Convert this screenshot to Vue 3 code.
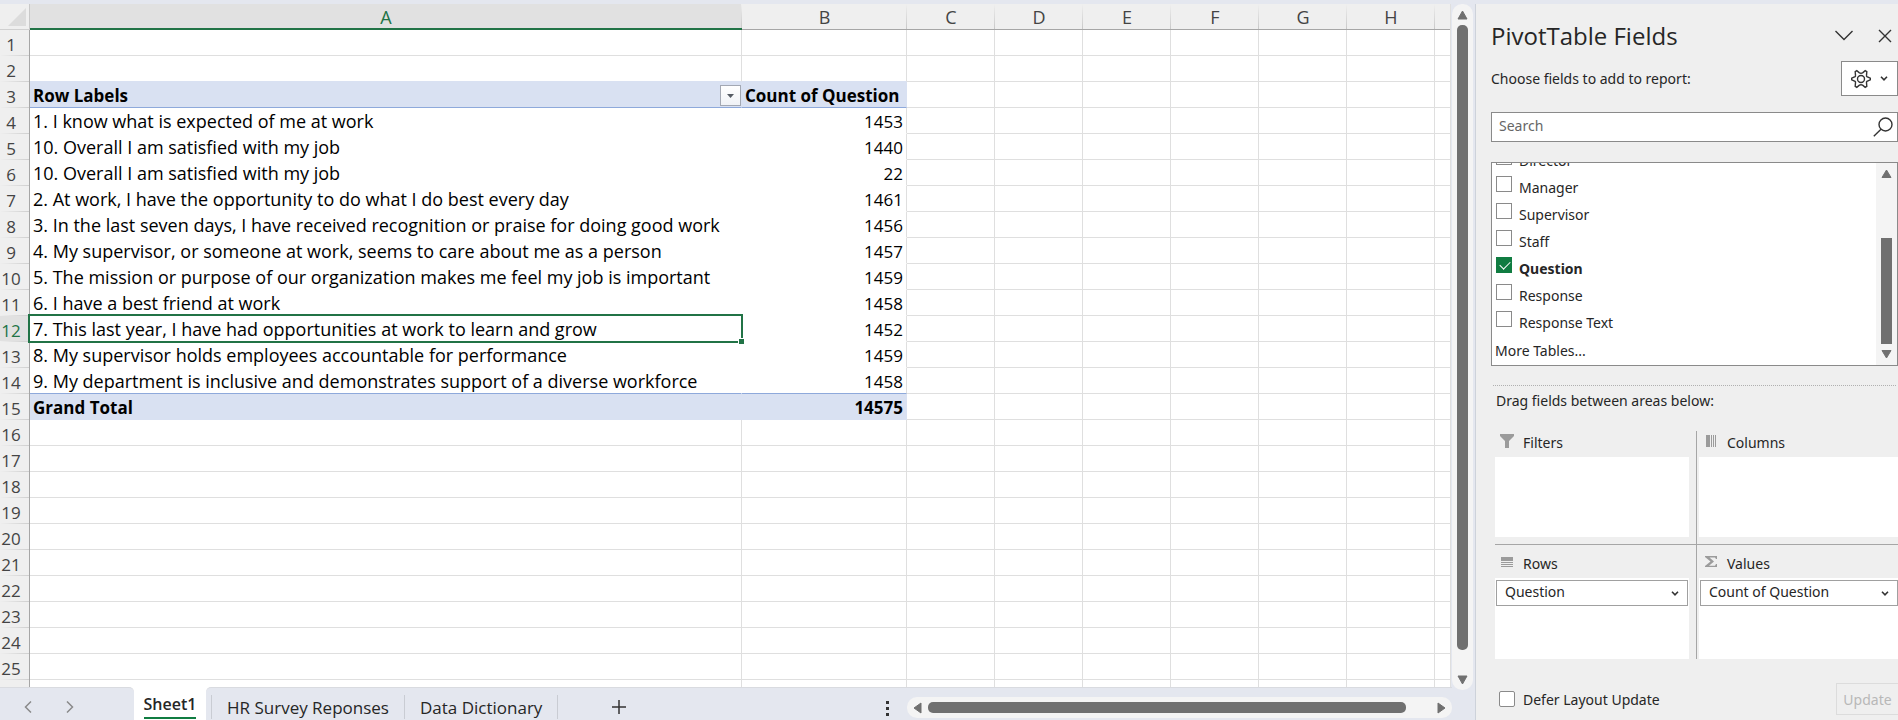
<script setup>
import { ref } from 'vue'

const columns = ['A', 'B', 'C', 'D', 'E', 'F', 'G', 'H', '']
const restColumns = columns.slice(2)

const content = {
  3: ['Row Labels', 'Count of Question'],
  4: ['1. I know what is expected of me at work', '1453'],
  5: ['10. Overall I am satisfied with my job', '1440'],
  6: ['10. Overall I am satisfied with my job', '22'],
  7: ['2. At work, I have the opportunity to do what I do best every day', '1461'],
  8: ['3. In the last seven days, I have received recognition or praise for doing good work', '1456'],
  9: ['4. My supervisor, or someone at work, seems to care about me as a person', '1457'],
  10: ['5. The mission or purpose of our organization makes me feel my job is important', '1459'],
  11: ['6. I have a best friend at work', '1458'],
  12: ['7. This last year, I have had opportunities at work to learn and grow', '1452'],
  13: ['8. My supervisor holds employees accountable for performance', '1459'],
  14: ['9. My department is inclusive and demonstrates support of a diverse workforce', '1458'],
  15: ['Grand Total', '14575'],
}
const rows = Array.from({ length: 26 }, (_, i) => {
  const n = i + 1
  return { n, label: n < 26 ? n : '', a: content[n]?.[0] ?? '', b: content[n]?.[1] ?? '' }
})
function rowClass(n) {
  return {
    'before-head': n === 2,
    'pivot-head': n === 3,
    'pivot-body': n > 3 && n < 15,
    'pivot-last': n === 14,
    'pivot-total': n === 15,
    active: n === 12,
  }
}

const fields = ref([
  { name: 'Director', on: false },
  { name: 'Manager', on: false },
  { name: 'Supervisor', on: false },
  { name: 'Staff', on: false },
  { name: 'Question', on: true },
  { name: 'Response', on: false },
  { name: 'Response Text', on: false },
])
const search = ref('')
const defer = ref(false)
</script>

<template>
  <div class="app">
    <main class="workbook">
      <div class="sheet">
        <div class="grid">
          <table>
            <colgroup>
              <col class="c-num" /><col class="c-a" /><col class="c-b" />
              <col v-for="i in 6" :key="i" class="c-std" /><col />
            </colgroup>
            <thead>
              <tr>
                <th class="corner"><svg width="18" height="18" viewBox="0 0 18 18"><path d="M18 0v18H0z" fill="#dcdcdc" /></svg></th>
                <th v-for="(c, i) in columns" :key="i" scope="col" :class="{ selected: i === 0 }">{{ c }}</th>
              </tr>
            </thead>
            <tbody>
              <tr v-for="r in rows" :key="r.n" :class="rowClass(r.n)">
                <th scope="row">{{ r.label }}</th>
                <td class="a">
                  <div v-if="r.n === 3" class="with-filter">
                    <span>{{ r.a }}</span>
                    <button class="filter" aria-label="Filter row labels">
                      <svg width="7" height="4" viewBox="0 0 7 4"><path d="M0 0h7L3.500 4z" fill="#555b63" /></svg>
                    </button>
                  </div>
                  <template v-else>{{ r.a }}</template>
                  <span v-if="r.n === 12" class="cursor"><i></i></span>
                </td>
                <td class="b">{{ r.b }}</td>
                <td v-for="(c, i) in restColumns" :key="i"></td>
              </tr>
            </tbody>
          </table>
        </div>

        <footer class="bar">
          <div class="bar-nav">
            <button aria-label="Previous sheet"><svg width="8" height="12" viewBox="0 0 8 12"><path d="M7 .5 1.500 6 7 11.500" /></svg></button>
            <button aria-label="Next sheet"><svg width="8" height="12" viewBox="0 0 8 12"><path d="M1 .5 6.500 6 1 11.500" /></svg></button>
          </div>
          <button class="tab-active"><span>Sheet1</span></button>
          <div class="bar-rest">
            <button class="tab">HR Survey Reponses</button>
            <button class="tab">Data Dictionary</button>
            <button class="add" aria-label="New sheet">
              <svg width="14" height="14" viewBox="0 0 14 14"><path d="M7 0v14M0 7h14" stroke="#333" stroke-width="1.500" /></svg>
            </button>
            <span class="dots"><i></i><i></i><i></i></span>
            <div class="hscroll">
              <svg width="9" height="12" viewBox="0 0 9 12"><path d="M8 1v10L1 6z" /></svg>
              <div class="track"><div class="thumb"></div></div>
              <svg width="9" height="12" viewBox="0 0 9 12"><path d="M1 1v10l7-5z" /></svg>
            </div>
          </div>
        </footer>
      </div>
      <div class="vscroll">
        <svg width="11" height="10" viewBox="0 0 11 10"><path d="M1 9h9L5.500 1z" /></svg>
        <div class="track"><div class="thumb"></div></div>
        <svg width="11" height="10" viewBox="0 0 11 10"><path d="M1 1h9L5.500 9z" /></svg>
      </div>
    </main>

    <aside class="pane">
      <header class="pane-head">
        <h1>PivotTable Fields</h1>
        <button aria-label="Pane options"><svg width="18" height="11" viewBox="0 0 18 11"><path d="M.5 1 9 9.500 17.500 1" /></svg></button>
        <button aria-label="Close"><svg width="14" height="14" viewBox="0 0 14 14"><path d="M1 1l12 12M13 1 1 13" /></svg></button>
      </header>

      <div class="choose">
        <p>Choose fields to add to report:</p>
        <button class="gear" aria-label="Tools">
          <svg width="20" height="20" viewBox="0 0 20 20">
            <path d="M19.300 9.200v1.600L15.900 12.400q-.6.500-.4 1.200l.3 3.700-1.600 1-2.600-2.200q-1.600-.8-3.200 0l-2.600 2.200-1.600-1 .3-3.700q.2-.7-.4-1.200L.7 10.800V9.200L4.100 7.600q.6-.5.400-1.200l-.3-3.700 1.600-1 2.600 2.200q1.600.8 3.200 0l2.600-2.200 1.600 1-.3 3.700q-.2.700.4 1.200z" />
            <circle cx="10" cy="10" r="3.500" />
          </svg>
          <svg width="8" height="5" viewBox="0 0 8 5"><path class="bold" d="M1 .8l3 3 3-3" /></svg>
        </button>
      </div>

      <label class="search">
        <input v-model="search" type="text" placeholder="Search" aria-label="Search" />
        <svg width="20" height="20" viewBox="0 0 20 20"><circle cx="12.500" cy="7.500" r="6.500" /><path d="M8 12.300.8 19.300" /></svg>
      </label>

      <div class="fields">
        <div class="fields-view">
          <ul>
            <li v-for="f in fields" :key="f.name">
              <label :class="{ on: f.on }"><input v-model="f.on" type="checkbox" />{{ f.name }}</label>
            </li>
          </ul>
          <a href="#">More Tables...</a>
        </div>
        <div class="fields-scroll">
          <svg width="11" height="9" viewBox="0 0 11 9"><path d="M1 8.500h9L5.500 1z" /></svg>
          <div class="track"><div class="thumb"></div></div>
          <svg width="11" height="9" viewBox="0 0 11 9"><path d="M1 .5h9L5.500 8z" /></svg>
        </div>
      </div>

      <p class="drag">Drag fields between areas below:</p>

      <div class="areas">
        <section>
          <h2><svg width="14" height="14" viewBox="0 0 14 14"><path d="M0 0h14v2L9 7v7H5V7L0 2z" /></svg>Filters</h2>
          <div class="drop"></div>
        </section>
        <section>
          <h2><svg width="14" height="14" viewBox="0 0 14 14"><path d="M2 1h4v12H2zM7 1h1v12H7zM9 1h1v12H9zM11 1h1v12h-1z" /></svg>Columns</h2>
          <div class="drop"></div>
        </section>
        <section>
          <h2><svg width="14" height="14" viewBox="0 0 14 14"><path d="M1 2h12v4H1zM1 7h12v1H1zM1 9h12v1H1zM1 11h12v1H1z" /></svg>Rows</h2>
          <div class="drop">
            <div class="chip">
              <select aria-label="Rows field"><option>Question</option></select>
              <svg width="8" height="5" viewBox="0 0 8 5"><path class="bold" d="M1 .8l3 3 3-3" /></svg>
            </div>
          </div>
        </section>
        <section>
          <h2><svg width="14" height="14" viewBox="0 0 14 14"><path d="M1 1h12v3h-1l-1-1.500H5.500L10 6.500l-5 4.200h6l1-1.700h1v3H1v-1l5.500-4.500L1 2z" /></svg>Values</h2>
          <div class="drop">
            <div class="chip">
              <select aria-label="Values field"><option>Count of Question</option></select>
              <svg width="8" height="5" viewBox="0 0 8 5"><path class="bold" d="M1 .8l3 3 3-3" /></svg>
            </div>
          </div>
        </section>
      </div>

      <div class="pane-foot">
        <label><input v-model="defer" type="checkbox" />Defer Layout Update</label>
        <button disabled>Update</button>
      </div>
    </aside>
  </div>
</template>

<style>
body { margin: 0; overflow: hidden; }
</style>

<style scoped>
* { box-sizing: border-box; }
button { border: 0; background: none; padding: 0; font: inherit; color: inherit; }
h1, h2, p, ul { margin: 0; padding: 0; font-weight: 400; }
svg { display: block; flex: none; }

.app {
  display: flex;
  height: 100vh;
  padding-top: 4px;
  background: #e4e7ef;
  font-family: "Open Sans", "Noto Sans", sans-serif;
  color: #262626;
}

/* Workbook */
.workbook { flex: 1; min-width: 0; display: flex; }
.sheet { flex: 1; min-width: 0; display: flex; flex-direction: column; }
.grid {
  flex: 1;
  min-height: 0;
  overflow: hidden;
  margin-right: 1px;
  border-right: 1px solid #dfdfdf;
  background: #fff;
}
table { width: 100%; table-layout: fixed; border-collapse: separate; border-spacing: 0; font-size: 18px; line-height: 23px; color: #000; }
.c-num { width: 30px; }
.c-a { width: 712px; }
.c-b { width: 165px; }
.c-std { width: 88px; }
tr { height: 26px; }
th, td { height: 26px; padding: 2px 0 0; white-space: nowrap; }
td { border-right: 1px solid #dfdfdf; border-bottom: 1px solid #dfdfdf; }
tr > :last-child { border-right: 0; }
th { font-weight: 400; color: #444; }
thead th {
  border-bottom: 1px solid #a6a6a6;
  background: linear-gradient(#efefef, #c8c8c8) right / 1px 100% no-repeat #efefef;
}
thead th:last-child { background: #efefef; }
thead th.selected { border-bottom: 2px solid #217346; line-height: 22px; background-color: #e1e1e1; color: #217346; }
thead th.corner { padding: 0 0 0 8px; border-bottom-color: #d0d0d0; border-right: 1px solid #c8c8c8; background: #efefef; }
tbody th {
  padding-right: 7px;
  border-right: 1px solid #a6a6a6;
  background: linear-gradient(90deg, #efefef, #cfcfcf) bottom / 100% 1px no-repeat #efefef;
  font-size: 17px;
  text-align: center;
}
.a { position: relative; padding-left: 3px; }
.b { padding-right: 3px; text-align: right; font-size: 17px; }
.before-head .a, .before-head .b { border-bottom-color: #d9e1f2; }
.pivot-head .a, .pivot-head .b, .pivot-total .a, .pivot-total .b { background: #d9e1f2; border-color: #d9e1f2; font-weight: 700; font-size: 17px; }
.pivot-head .a, .pivot-head .b { border-bottom-color: #8ea9db; }
.pivot-head .a { padding-top: 0; }
.pivot-head .b { padding-left: 3px; text-align: left; }
.pivot-body .a { border-color: #fff; }
.pivot-body .b { border-bottom-color: #fff; }
.pivot-last .a, .pivot-last .b { border-bottom-color: #8ea9db; }
.active th { color: #217346; background-color: #e1e1e1; }
.with-filter { display: flex; align-items: center; justify-content: space-between; height: 25px; }
.with-filter span { padding-top: 2px; }
.filter {
  display: flex; align-items: center; justify-content: center;
  width: 21px; height: 21px; margin-top: 2px;
  border: 1px solid #a3a8b3;
  background: linear-gradient(#fff, #f0f2f6);
}
.cursor { position: absolute; z-index: 1; inset: -2px; border: 2px solid #217346; }
.cursor i { position: absolute; right: -4px; bottom: -4px; width: 7px; height: 7px; border: 1px solid #fff; background: #217346; }

/* Sheet tabs */
.bar { flex: none; display: flex; height: 33px; background: #fff; }
.bar button { display: flex; align-items: center; justify-content: center; }
.bar-nav {
  display: flex; align-items: center; gap: 34px;
  width: 134px; padding: 5px 0 0 24px;
  border-top: 1px solid #d9dbe0;
  border-top-right-radius: 5px;
  background: #e4e7ef;
}
.bar-nav path { fill: none; stroke: #8a8a8a; stroke-width: 1.5; }
.bar .tab-active { width: 72px; padding-top: 6px; align-items: flex-start; font-size: 16px; font-weight: 600; line-height: 22px; }
.tab-active span { padding-bottom: 2px; border-bottom: 2px solid #107c41; }
.bar-rest {
  flex: 1; min-width: 0; display: flex; align-items: center;
  padding-left: 5px;
  border-top: 1px solid #d9dbe0;
  border-top-left-radius: 5px;
  background: #e4e7ef;
  font-size: 17px;
  line-height: 23px;
}
.bar .tab { height: 24px; margin-top: 6px; padding: 0 15px; border-right: 1px solid #c9ccd3; white-space: nowrap; }
.tab:first-child { border-left: 1px solid #c9ccd3; }
.bar .add { margin: 5px auto 0 54px; }
.dots { display: flex; flex-direction: column; gap: 3px; margin: 8px 18px 0 0; }
.dots i { width: 3px; height: 3px; background: #333; }

/* Scroll bars */
.hscroll path, .vscroll path { fill: #707070; stroke: #707070; stroke-linejoin: round; }
.thumb { background: #707070; border-radius: 5px; }
.hscroll { display: flex; align-items: center; gap: 6px; flex: 0 1 545px; height: 21px; margin-top: 7px; padding: 0 6px; border-radius: 10px; background: #f4f4f4; }
.hscroll .track { flex: 1; }
.hscroll .thumb { width: 95%; height: 11px; }
.vscroll { flex: none; display: flex; flex-direction: column; align-items: center; gap: 12px; width: 21px; margin: 0 2px 30px 0; padding: 6px 0 5px; border-radius: 10px; background: #f4f4f4; }
.vscroll .track { flex: 1; margin-top: -7px; }
.vscroll .thumb { width: 11px; height: 98%; }

/* Field pane */
.pane {
  flex: none; width: 423px;
  padding-left: 15px;
  border-left: 1px solid #cdd2da;
  background: #efefef;
  font: 14px/27px "Noto Sans", "Open Sans", sans-serif;
}
.pane path, .pane circle { fill: none; stroke: #333; stroke-width: 1.4; }
.pane path.bold { stroke-width: 1.6; }
.pane .fields-scroll path { fill: #707070; stroke: #707070; stroke-width: 1; stroke-linejoin: round; }
.pane-head { display: flex; align-items: center; height: 57px; padding: 15px 6px 9px 0; gap: 25px; }
.pane-head h1 { margin-right: auto; font: 400 24px/33px "Open Sans", "Noto Sans", sans-serif; }
.choose { display: flex; align-items: center; justify-content: space-between; height: 35px; }
.gear { display: flex; align-items: center; justify-content: center; gap: 9px; width: 57px; height: 35px; border: 1px solid #8a8a8a; background: #fff; }
.search { display: flex; align-items: center; height: 30px; margin-top: 16px; padding-right: 4px; border: 1px solid #8a8a8a; background: #fff; }
.search input { flex: 1; min-width: 0; height: 26px; border: 0; padding: 0 0 4px 7px; outline: 0; background: none; font: inherit; line-height: 22px; }
.search input::placeholder { color: #666; opacity: 1; }
.fields { display: flex; height: 204px; margin-top: 20px; border: 1px solid #8a8a8a; background: #fff; }
.fields-view { flex: 1; overflow: hidden; padding-left: 4px; }
.fields ul { margin-top: -16px; list-style: none; }
.fields label { display: flex; align-items: flex-start; gap: 7px; }
.fields label.on { font-weight: 700; }
.fields a { display: block; margin-top: 1px; margin-left: -1px; color: inherit; text-decoration: none; }
input[type='checkbox'] { appearance: none; flex: none; width: 16px; height: 16px; margin: 0; border: 1px solid #8a8a8a; background: #fff; }
.fields input[type='checkbox'] { margin-top: 2px; }
.fields input[type='checkbox']:checked { border-color: #107c41; background: #107c41; }
.fields input:checked::before {
  content: '';
  display: block;
  width: 9px; height: 5px;
  margin: 3px 0 0 3px;
  border: solid #fff;
  border-width: 0 0 1px 1px;
  transform: rotate(-45deg);
}
.fields-scroll { display: flex; flex-direction: column; align-items: center; width: 21px; padding: 6px 0; gap: 6px; background: #f4f4f4; }
.fields-scroll .track { flex: 1; display: flex; align-items: flex-end; }
.fields-scroll .thumb { width: 11px; height: 66%; border-radius: 0; }
.drag { margin: 19px 2px 0; padding: 1px 0 0 3px; border-top: 1px dotted #b0b0b0; }
.areas { display: grid; grid-template-columns: 202px 1fr; margin: 17px 0 0 4px; }
section { padding-bottom: 7px; }
section:nth-child(odd) { border-right: 1px solid #a6a6a6; padding-right: 7px; }
section:nth-child(even) { padding-left: 2px; }
section:nth-child(-n + 2) { border-bottom: 1px solid #a6a6a6; }
section:nth-child(n + 3) { padding-top: 7px; padding-bottom: 0; }
h2 { display: flex; align-items: center; gap: 9px; height: 26px; padding: 0 0 3px 5px; font-size: 14px; line-height: 23px; }
.pane h2 path { fill: #9b9b9b; stroke: none; }
h2 svg { margin-bottom: 4px; }
.drop { height: 80px; padding: 2px 1px; background: #fff; }
section:nth-child(n + 3) .drop { height: 81px; }
section:nth-child(even) .drop { padding-right: 0; }
.chip { position: relative; }
.chip select { appearance: none; display: block; width: 100%; height: 26px; padding: 0 24px 2px 8px; border: 1px solid #a0a0a0; border-radius: 0; background: #fff; color: inherit; font: inherit; line-height: 22px; }
.chip svg { position: absolute; right: 9px; top: 11px; }
.pane-foot { display: flex; align-items: center; justify-content: space-between; height: 32px; margin-top: 24px; padding-left: 8px; }
.pane-foot label { display: flex; align-items: center; gap: 8px; }
.pane-foot input[type='checkbox'] { border-radius: 2px; }
.pane-foot button { width: 62px; height: 32px; border: 1px solid #dcdcdc; border-right: 0; color: #b8b8b8; }
</style>
